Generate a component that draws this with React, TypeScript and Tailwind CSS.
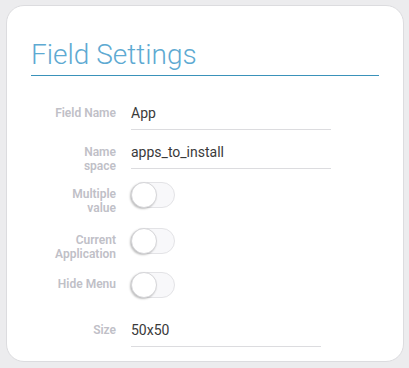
import React from "react";

function Toggle() {
  return (
    <div className="relative h-[26px] w-[44px] shrink-0">
      <div className="absolute inset-0 rounded-full border border-[#e3e3e6] bg-[#f8f8fa]" />
      <div className="absolute left-0 top-0 h-[26px] w-[26px] rounded-full border border-[#d6d6d9] bg-white shadow-[-1px_1px_2px_rgba(0,0,0,0.25)]" />
    </div>
  );
}

function Label({ children, pt }: { children: React.ReactNode; pt: string }) {
  return (
    <div
      className={`w-[85px] shrink-0 text-right text-[12px] font-semibold leading-[14px] text-[#c0c0c7] ${pt}`}
    >
      {children}
    </div>
  );
}

function TextRow({
  label,
  value,
  width,
  className,
}: {
  label: React.ReactNode;
  value: string;
  width: string;
  className: string;
}) {
  return (
    <div className={`flex h-[33px] items-start gap-[15px] ${className}`}>
      <Label pt="pt-[9px]">{label}</Label>
      <div
        className={`flex h-[33px] items-center border-b border-[#dcdcdf] text-[14px] leading-[16px] text-[#3a3a3a] ${width}`}
      >
        {value}
      </div>
    </div>
  );
}

function ToggleRow({ label, className }: { label: React.ReactNode; className: string }) {
  return (
    <div className={`flex items-start gap-[15px] ${className}`}>
      <Label pt="pt-[5px]">{label}</Label>
      <Toggle />
    </div>
  );
}

export default function App() {
  return (
    <div
      className="h-[368px] w-[409px] bg-[#ececee] pl-[6px] pt-[5px]"
      style={{ fontFamily: "Roboto, 'Liberation Sans', sans-serif" }}
    >
      <div className="h-[357px] w-[398px] rounded-[18px] border border-[#dcdcdf] bg-white pl-[24px] pt-[31px]">
        <div className="w-[348px] border-b border-[#3a92ba] pb-[2px]">
          <div className="text-[28px] font-light leading-[36px] text-[#5eaad2]">Field Settings</div>
        </div>
        <TextRow className="mt-[21px]" label="Field Name" value="App" width="w-[200px]" />
        <TextRow
          className="mt-[6px]"
          label={
            <>
              Name
              <br />
              space
            </>
          }
          value="apps_to_install"
          width="w-[200px]"
        />
        <ToggleRow
          className="mt-[13px]"
          label={
            <>
              Multiple
              <br />
              value
            </>
          }
        />
        <ToggleRow
          className="mt-[13px]"
          label={
            <>
              Current
              <br />
              Application
            </>
          }
        />
        <ToggleRow className="mt-[11px]" label="Hide Menu" />
        <TextRow className="mt-[16px]" label="Size" value="50x50" width="w-[190px]" />
      </div>
    </div>
  );
}
